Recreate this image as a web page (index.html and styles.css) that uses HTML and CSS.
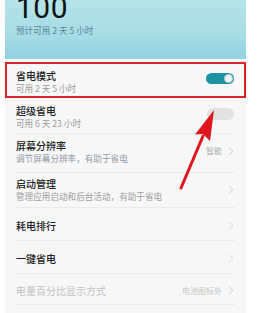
FILE: index.html
```html
<!DOCTYPE html>
<html lang="zh">
<head>
<meta charset="utf-8">
<link rel="stylesheet" href="styles.css">
</head>
<body>
<div class="screen">
  <header class="battery">
    <div class="level">100</div>
    <div class="estimate">预计可用 2 天 5 小时</div>
  </header>
  <div class="list">
    <div class="row highlight">
      <div class="text">
        <div class="title">省电模式</div>
        <div class="sub">可用 2 天 5 小时</div>
      </div>
      <span class="switch on"><span class="knob"></span></span>
    </div>
    <div class="row r2">
      <div class="text">
        <div class="title">超级省电</div>
        <div class="sub">可用 6 天 23 小时</div>
      </div>
      <span class="switch off"></span>
    </div>
    <div class="row r3">
      <div class="text">
        <div class="title">屏幕分辨率</div>
        <div class="sub blue">调节屏幕分辨率，有助于省电</div>
      </div>
      <div class="value">智能<svg class="chev" width="6" height="9" viewBox="0 0 6 9"><polyline points="1,1 5,4.5 1,8" fill="none" stroke="#c8c8c8" stroke-width="1"/></svg></div>
    </div>
    <div class="row r4">
      <div class="text">
        <div class="title">启动管理</div>
        <div class="sub">管理应用启动和后台活动，有助于省电</div>
      </div>
      <svg class="chev" width="6" height="9" viewBox="0 0 6 9"><polyline points="1,1 5,4.5 1,8" fill="none" stroke="#d0d0d0" stroke-width="1"/></svg>
    </div>
    <div class="row single">
      <div class="title">耗电排行</div>
      <svg class="chev" width="6" height="9" viewBox="0 0 6 9"><polyline points="1,1 5,4.5 1,8" fill="none" stroke="#d8d8d8" stroke-width="1"/></svg>
    </div>
    <div class="row single">
      <div class="title">一键省电</div>
      <svg class="chev" width="6" height="9" viewBox="0 0 6 9"><polyline points="1,1 5,4.5 1,8" fill="none" stroke="#d8d8d8" stroke-width="1"/></svg>
    </div>
    <div class="row single last">
      <div class="title faded">电量百分比显示方式</div>
      <div class="value light">电池图标外<svg class="chev" width="6" height="9" viewBox="0 0 6 9"><polyline points="1,1 5,4.5 1,8" fill="none" stroke="#cfcfcf" stroke-width="1"/></svg></div>
    </div>
  </div>
  <svg class="arrow" width="267" height="313" viewBox="0 0 267 313">
    <line x1="181" y1="188" x2="203" y2="136" stroke="#e0161c" stroke-width="3" stroke-linecap="round"/>
    <polygon points="214,110 195,134.5 203,134 210,141" fill="#e0161c"/>
  </svg>
</div>
</body>
</html>
```

FILE: styles.css
```css
html, body {
  margin: 0;
  padding: 0;
  background: #ffffff;
}
body {
  font-family: "Noto Sans CJK SC", "Noto Sans", sans-serif;
  width: 267px;
  height: 313px;
  overflow: hidden;
}
.screen {
  position: relative;
  width: 241px;
  height: 313px;
  margin-left: 5px;
  background: #f7f7f7;
}
.battery {
  height: 59px;
  box-sizing: border-box;
  padding-left: 11px;
  background: linear-gradient(180deg, #b4e3eb 0%, #a6dce6 60%, #8fd2de 100%);
  overflow: hidden;
}
.level {
  font-family: Roboto, "Liberation Sans", sans-serif;
  font-size: 30px;
  line-height: 30px;
  margin-top: -7px;
  color: #111;
  letter-spacing: 0.5px;
}
.estimate {
  margin-top: 2px;
  font-size: 8.6px;
  line-height: 11px;
  color: #5a8592;
}
.list {
  padding-top: 3px;
}
.row {
  display: flex;
  align-items: center;
  justify-content: space-between;
  margin: 0 11px;
  border-bottom: 1px solid #ebebeb;
  box-sizing: border-box;
}
.row.highlight {
  margin: 0;
  border: 2px solid #d9232b;
  height: 36px;
  padding: 0 10px 0 9px;
  align-items: flex-start;
}
.highlight .text { padding-top: 5px; }
.highlight .switch { margin-top: 9px; }
.r2 {
  height: 36px;
  align-items: flex-start;
}
.r2 .text { padding-top: 6px; }
.r2 .switch { margin-top: 10px; margin-right: 1px; }
.r3 {
  height: 39px;
  align-items: flex-start;
}
.r3 .text { padding-top: 5px; }
.r3 .value { margin-top: 12px; }
.r4 {
  height: 35px;
  align-items: flex-start;
}
.r4 .text { padding-top: 4px; }
.r4 > .chev { margin-top: 12px; margin-right: 1px; }
.single {
  height: 33px;
  padding-top: 3px;
}
.single.last { height: 31px; }
.single > .chev { margin-right: 1px; }
.title {
  font-size: 10px;
  line-height: 14px;
  font-weight: 500;
  color: #222;
}
.title.faded {
  font-weight: 400;
  color: #c2c2c2;
}
.sub {
  font-size: 8.6px;
  line-height: 11.5px;
  color: #9b9b9b;
}
.sub.blue { color: #8f9aa6; }
.value {
  display: flex;
  align-items: center;
  gap: 6px;
  font-size: 8px;
  line-height: 10px;
  color: #ababab;
  margin-right: 1px;
}
.value.light { color: #c6c6c6; }
.chev { display: block; }
.switch {
  display: block;
  position: relative;
  width: 28px;
  height: 11px;
  border-radius: 6px;
  box-sizing: border-box;
}
.switch.on { background: #1b93a3; }
.switch.off { background: #e2e2e2; width: 27px; height: 12px; }
.knob {
  position: absolute;
  right: 1px;
  top: 1px;
  width: 9px;
  height: 9px;
  border-radius: 50%;
  background: #f4f4f4;
  box-sizing: border-box;
  border: 1px solid #bfcfd2;
}
.arrow {
  position: absolute;
  left: -5px;
  top: 0;
  pointer-events: none;
}
```
